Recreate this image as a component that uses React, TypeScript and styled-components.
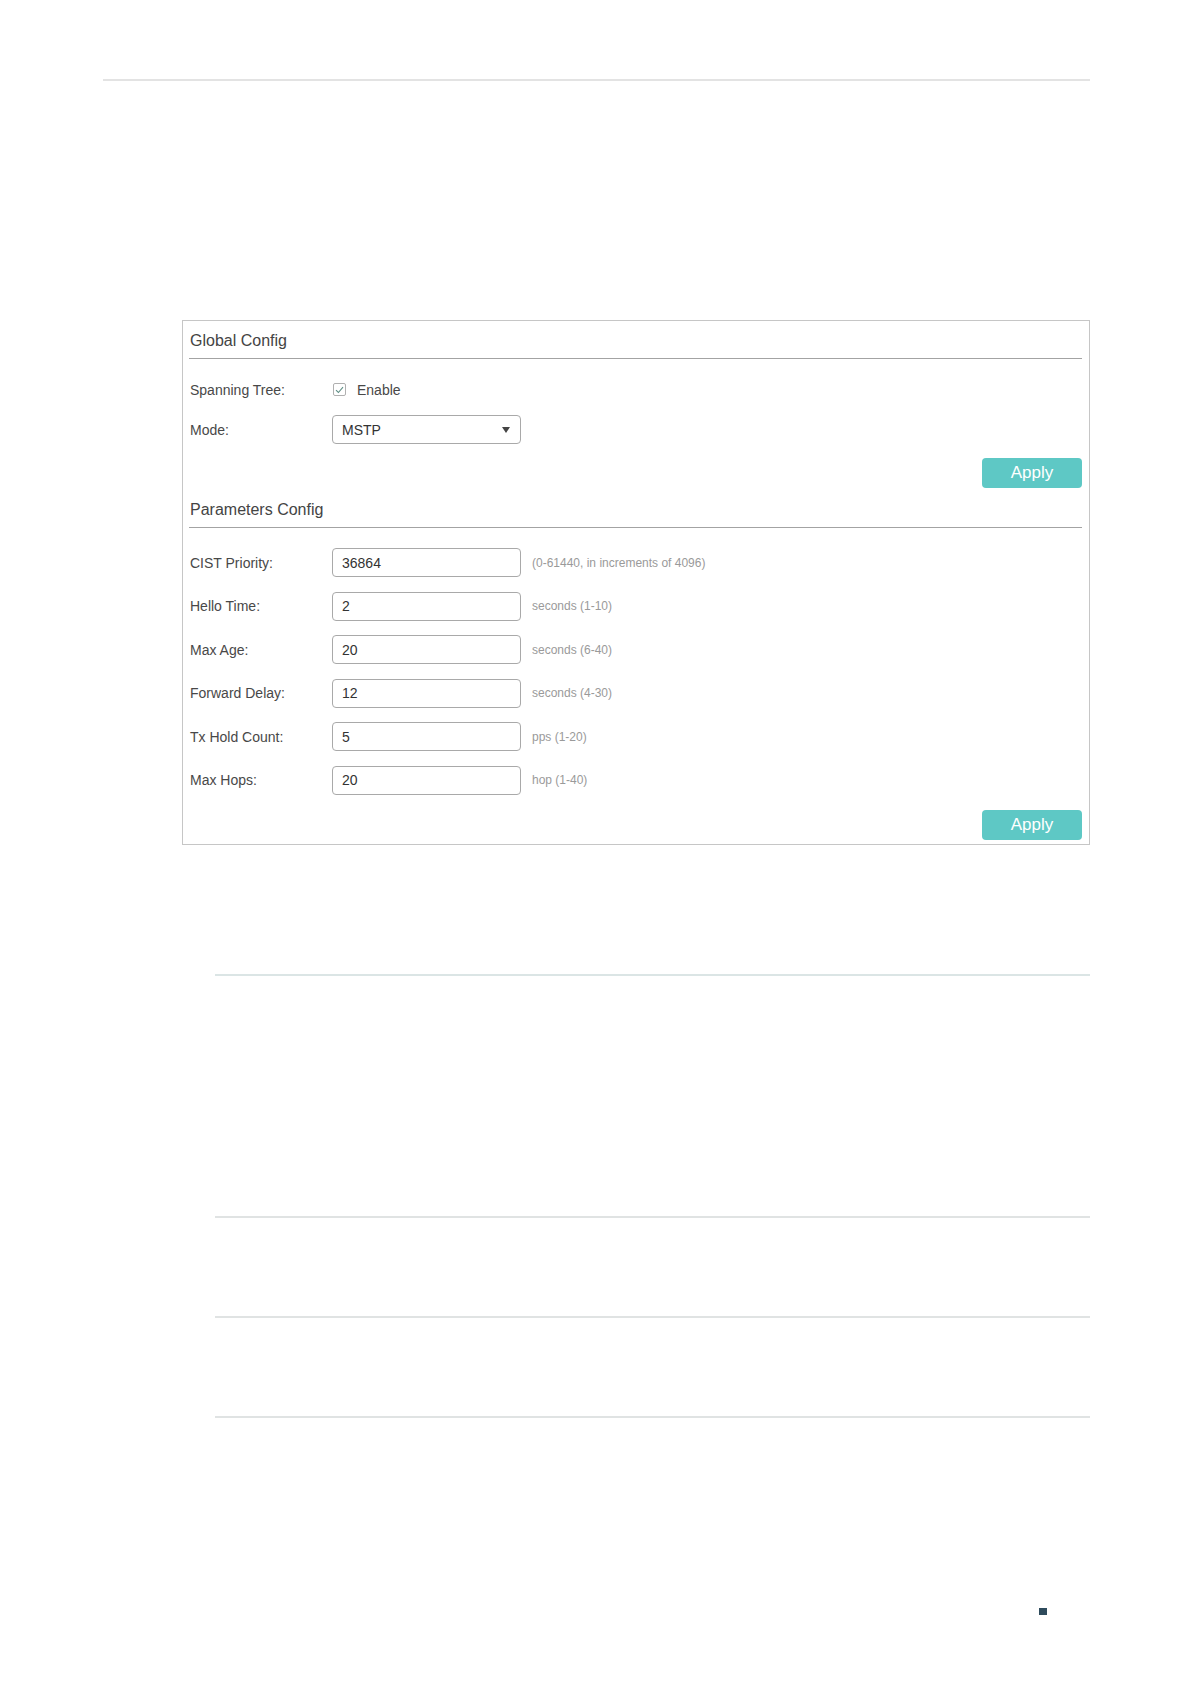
import React from "react";
import styled, { createGlobalStyle } from "styled-components";

const Global = createGlobalStyle`
  html, body { margin: 0; padding: 0; background: #ffffff; }
  body { font-family: "Liberation Sans", Arial, sans-serif; color: #333; }
  * { box-sizing: border-box; }
`;

const Page = styled.div`
  width: 1191px;
  min-height: 1684px;
  padding-top: 79px;
  display: flex;
  flex-direction: column;
  align-items: flex-start;
`;

const Rule = styled.div<{ $left: number; $width: number; $top: number; $color?: string }>`
  margin-left: ${(p) => p.$left}px;
  margin-top: ${(p) => p.$top}px;
  width: ${(p) => p.$width}px;
  height: 2px;
  background: ${(p) => p.$color || "#e2e4e4"};
`;

const Panel = styled.section`
  margin-left: 182px;
  margin-top: 239px;
  width: 908px;
  height: 525px;
  border: 1px solid #c6c6c6;
  padding: 0 7px 4px 6px;
  display: flex;
  flex-direction: column;
`;

const SectionTitle = styled.div<{ $mt?: number }>`
  height: 38px;
  line-height: 40px;
  margin-top: ${(p) => p.$mt || 0}px;
  font-size: 16px;
  color: #444;
  border-bottom: 1px solid #a3a3a3;
  padding-left: 1px;
`;

const Rows = styled.div<{ $pt: number; $gap: number }>`
  display: flex;
  flex-direction: column;
  padding-top: ${(p) => p.$pt}px;
  gap: ${(p) => p.$gap}px;
`;

const Row = styled.div`
  display: grid;
  grid-template-columns: 143px 189px auto;
  align-items: center;
  height: 29px;
`;

const Label = styled.div`
  font-size: 14px;
  color: #484848;
  padding-left: 1px;
`;

const CheckWrap = styled.label`
  display: flex;
  align-items: center;
  gap: 11px;
  font-size: 14px;
  color: #484848;
  padding-left: 1px;
`;

const Box = styled.span`
  width: 13px;
  height: 13px;
  border: 1px solid #b0b0b0;
  border-radius: 2px;
  display: flex;
  align-items: center;
  justify-content: center;
`;

const Field = styled.div`
  height: 29px;
  border: 1px solid #a9a9a9;
  border-radius: 4px;
  display: flex;
  align-items: center;
  justify-content: space-between;
  padding: 0 9px 0 9px;
  font-size: 14px;
  color: #333;
  background: #fff;
`;

const Arrow = styled.span`
  width: 0;
  height: 0;
  border-left: 4.5px solid transparent;
  border-right: 4.5px solid transparent;
  border-top: 6px solid #444;
  margin-right: 1px;
`;

const Hint = styled.span`
  font-size: 12px;
  color: #9a9a9a;
  padding-left: 11px;
  white-space: nowrap;
`;

const ButtonBar = styled.div<{ $mt: number }>`
  display: flex;
  justify-content: flex-end;
  margin-top: ${(p) => p.$mt}px;
`;

const ApplyButton = styled.button`
  width: 100px;
  height: 30px;
  border: none;
  border-radius: 4px;
  background: #5ec8c5;
  color: #fff;
  font-family: "Liberation Sans", Arial, sans-serif;
  font-size: 17px;
  padding: 0;
  cursor: pointer;
`;

const Marker = styled.div`
  margin-left: 1039px;
  margin-top: 190px;
  width: 8px;
  height: 7px;
  background: #2e4b5c;
`;

const params = [
  { label: "CIST Priority:", value: "36864", hint: "(0-61440, in increments of 4096)" },
  { label: "Hello Time:", value: "2", hint: "seconds (1-10)" },
  { label: "Max Age:", value: "20", hint: "seconds (6-40)" },
  { label: "Forward Delay:", value: "12", hint: "seconds (4-30)" },
  { label: "Tx Hold Count:", value: "5", hint: "pps (1-20)" },
  { label: "Max Hops:", value: "20", hint: "hop (1-40)" },
];

export default function App() {
  return (
    <>
      <Global />
      <Page>
        <Rule $left={103} $width={987} $top={0} $color="#e3e3e3" />
        <Panel>
          <SectionTitle>Global Config</SectionTitle>
          <Rows $pt={16} $gap={11}>
            <Row>
              <Label>Spanning Tree:</Label>
              <CheckWrap>
                <Box>
                  <svg width="9" height="8" viewBox="0 0 9 8">
                    <path d="M1 4.2 L3.4 6.5 L8 1.2" fill="none" stroke="#5f8f86" strokeWidth="1.1" />
                  </svg>
                </Box>
                Enable
              </CheckWrap>
            </Row>
            <Row>
              <Label>Mode:</Label>
              <Field>
                <span>MSTP</span>
                <Arrow />
              </Field>
            </Row>
          </Rows>
          <ButtonBar $mt={14}>
            <ApplyButton>Apply</ApplyButton>
          </ButtonBar>
          <SectionTitle $mt={1.5}>Parameters Config</SectionTitle>
          <Rows $pt={20.5} $gap={14.6}>
            {params.map((p) => (
              <Row key={p.label}>
                <Label>{p.label}</Label>
                <Field>
                  <span>{p.value}</span>
                </Field>
                <Hint>{p.hint}</Hint>
              </Row>
            ))}
          </Rows>
          <ButtonBar $mt={15}>
            <ApplyButton>Apply</ApplyButton>
          </ButtonBar>
        </Panel>
        <Rule $left={215} $width={875} $top={129} $color="#dbe5e5" />
        <Rule $left={215} $width={875} $top={240} $color="#e0e3e3" />
        <Rule $left={215} $width={875} $top={98} $color="#e0e3e3" />
        <Rule $left={215} $width={875} $top={98} $color="#e0e3e3" />
        <Marker />
      </Page>
    </>
  );
}
